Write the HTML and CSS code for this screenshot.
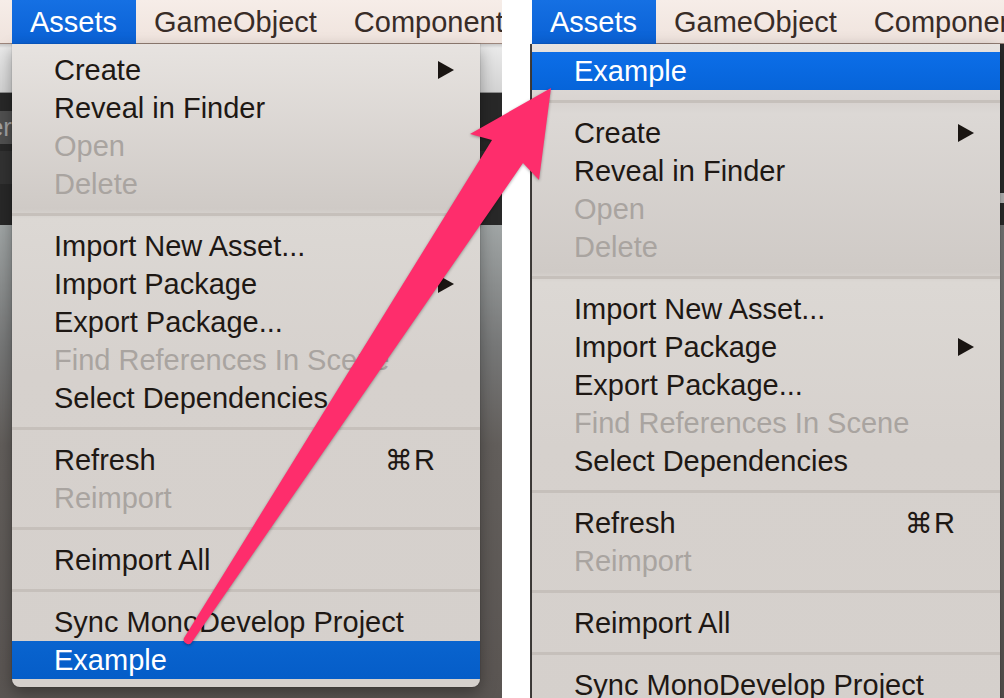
FILE: index.html
```html
<!DOCTYPE html>
<html>
<head>
<meta charset="utf-8">
<link rel="stylesheet" href="styles.css">
</head>
<body>
<div class="page">
  <section class="shot shot-left">
    <div class="menubar">
      <span class="mb-item active">Assets</span>
      <span class="mb-item">GameObject</span>
      <span class="mb-item">Component</span>
    </div>
    <div class="workspace">
      <div class="toolbar"></div>
      <div class="panel">
        <div class="tab"><span>Hierarchy Header</span></div>
        <div class="panel-row"></div>
      </div>
      <div class="scene"></div>
    </div>
    <div class="dropdown">
      <div class="item"><span class="label">Create</span><span class="sub-arrow"></span></div>
      <div class="item"><span class="label">Reveal in Finder</span></div>
      <div class="item disabled"><span class="label">Open</span></div>
      <div class="item disabled"><span class="label">Delete</span></div>
      <div class="sep"></div>
      <div class="item"><span class="label">Import New Asset...</span></div>
      <div class="item"><span class="label">Import Package</span><span class="sub-arrow"></span></div>
      <div class="item"><span class="label">Export Package...</span></div>
      <div class="item disabled"><span class="label">Find References In Scene</span></div>
      <div class="item"><span class="label">Select Dependencies</span></div>
      <div class="sep"></div>
      <div class="item"><span class="label">Refresh</span><span class="shortcut"><span class="cmd">⌘</span>R</span></div>
      <div class="item disabled"><span class="label">Reimport</span></div>
      <div class="sep"></div>
      <div class="item"><span class="label">Reimport All</span></div>
      <div class="sep"></div>
      <div class="item"><span class="label">Sync MonoDevelop Project</span></div>
      <div class="item selected"><span class="label">Example</span></div>
    </div>
  </section>

  <section class="shot shot-right">
    <div class="menubar">
      <span class="mb-item active">Assets</span>
      <span class="mb-item">GameObject</span>
      <span class="mb-item">Component</span>
    </div>
    <div class="workspace workspace-right">
      <div class="edge-left"></div>
      <div class="fill"></div>
      <div class="edge-right">
        <div class="er-dark"></div>
        <div class="er-light"></div>
        <div class="er-dark2"></div>
        <div class="er-scene"></div>
      </div>
    </div>
    <div class="dropdown">
      <div class="item selected top"><span class="label">Example</span></div>
      <div class="sep"></div>
      <div class="item"><span class="label">Create</span><span class="sub-arrow"></span></div>
      <div class="item"><span class="label">Reveal in Finder</span></div>
      <div class="item disabled"><span class="label">Open</span></div>
      <div class="item disabled"><span class="label">Delete</span></div>
      <div class="sep"></div>
      <div class="item"><span class="label">Import New Asset...</span></div>
      <div class="item"><span class="label">Import Package</span><span class="sub-arrow"></span></div>
      <div class="item"><span class="label">Export Package...</span></div>
      <div class="item disabled"><span class="label">Find References In Scene</span></div>
      <div class="item"><span class="label">Select Dependencies</span></div>
      <div class="sep"></div>
      <div class="item"><span class="label">Refresh</span><span class="shortcut"><span class="cmd">⌘</span>R</span></div>
      <div class="item disabled"><span class="label">Reimport</span></div>
      <div class="sep"></div>
      <div class="item"><span class="label">Reimport All</span></div>
      <div class="sep"></div>
      <div class="item"><span class="label">Sync MonoDevelop Project</span></div>
    </div>
  </section>

  <svg class="arrow" width="1004" height="698" viewBox="0 0 1004 698" xmlns="http://www.w3.org/2000/svg">
    <path d="M184,638 L492,140 L470,134 L551,88 L539,180 L523,163 L192,642 A4.5,4.5 0 0 1 184,638 Z" fill="#fe2d6c"/>
  </svg>
</div>
</body>
</html>
```

FILE: styles.css
```css
* {
  box-sizing: border-box;
  margin: 0;
  padding: 0;
}

html, body {
  width: 1004px;
  height: 698px;
  overflow: hidden;
  background: #ffffff;
}

body {
  font-family: "Liberation Sans", Arial, sans-serif;
}

.page {
  position: relative;
  display: flex;
  gap: 28px;
  width: 1004px;
  height: 698px;
}

.shot {
  position: relative;
  display: flex;
  flex-direction: column;
  height: 698px;
  overflow: hidden;
  flex-shrink: 0;
}

.shot-left {
  width: 502px;
}

.shot-right {
  width: 474px;
}

/* ---------- menu bar ---------- */
.menubar {
  height: 44px;
  flex-shrink: 0;
  display: flex;
  padding-left: 12px;
  background: linear-gradient(#f6ede8, #efe3dd);
  box-shadow: inset 0 -1px 0 #9c867c;
}

.shot-right .menubar {
  margin-left: 2px;
  padding-left: 0;
}

.mb-item {
  padding: 0 19px 0 18px;
  line-height: 44px;
  font-size: 29px;
  color: #382c27;
  white-space: nowrap;
}

.mb-item.active {
  background: linear-gradient(#1570e3, #0a61d5);
  color: #ffffff;
}

/* ---------- workspace behind the menus ---------- */
.workspace {
  flex: 1;
  display: flex;
  flex-direction: column;
}

.toolbar {
  height: 49px;
  background: linear-gradient(#c9c9c9 0, #e9e9e9 4px, #d3d3d3 100%);
  border-bottom: 1px solid #8e8e8e;
}

.panel {
  height: 132px;
  background: #282828;
  padding-top: 18px;
}

.tab {
  width: 12px;
  height: 33px;
  background: #505050;
  color: #a3a3a3;
  font-size: 26px;
  line-height: 33px;
  display: flex;
  justify-content: flex-end;
  overflow: hidden;
  white-space: nowrap;
}

.panel-row {
  height: 33px;
  margin-top: 7px;
  background: #323232;
}

.scene {
  flex: 1;
  background: linear-gradient(#a0a5a5 0, #777878 120px, #625e5b 220px, #5a5552 100%);
}

.workspace-right {
  flex-direction: row;
}

.edge-left {
  width: 2px;
  background: #4b4745;
}

.fill {
  flex: 1;
  background: #5a5552;
}

.edge-right {
  width: 4px;
  display: flex;
  flex-direction: column;
}

.er-dark {
  height: 149px;
  background: #2b2b2b;
}

.er-light {
  height: 10px;
  background: #bdbdbd;
}

.er-dark2 {
  height: 22px;
  background: #2b2b2b;
}

.er-scene {
  flex: 1;
  background: linear-gradient(#7a7a7a, #5a5552);
}

/* ---------- dropdown menus ---------- */
.dropdown {
  position: absolute;
  top: 44px;
  width: 468px;
  font-size: 29px;
  color: #1e1814;
  box-shadow: 0 6px 16px rgba(0, 0, 0, 0.35), 0 0 0 1px rgba(0, 0, 0, 0.06);
}

.shot-left .dropdown {
  left: 12px;
  padding: 7px 0 8px;
  border-radius: 0 0 8px 8px;
  background: linear-gradient(#e7e3e0 0, #cfcac6 165px, #dcd8d4 175px, #d6d1cd 330px, #d5d0cc 100%);
}

.shot-right .dropdown {
  left: 2px;
  padding-top: 8px;
  height: 680px;
  background: linear-gradient(#e7e3e0 0, #d8d3d0 60px, #dcd8d5 70px, #cfcac6 228px, #dcd8d4 238px, #d6d1cd 400px, #d5d0cc 100%);
}

.item {
  display: flex;
  align-items: center;
  height: 38px;
  padding: 0 26px 0 42px;
  white-space: nowrap;
}

.label {
  flex: 1;
}

.item.disabled {
  color: #a9a4a0;
}

.item.selected {
  background: linear-gradient(#0964cf, #055dc8);
  color: #ffffff;
}

.item.selected.top {
  background: linear-gradient(#0c6ee8, #0664d9);
}

.sub-arrow {
  width: 0;
  height: 0;
  border-left: 16px solid #1a1512;
  border-top: 9.5px solid transparent;
  border-bottom: 9.5px solid transparent;
}

.shortcut {
  margin-right: 19px;
  display: flex;
  align-items: center;
}

.cmd {
  font-family: "DejaVu Sans", sans-serif;
  font-size: 28px;
  margin-right: 1px;
}

.sep {
  height: 3px;
  margin: 10px 0 11px;
  background: #c6c0bb;
}

/* ---------- annotation arrow ---------- */
.arrow {
  position: absolute;
  left: 0;
  top: 0;
  pointer-events: none;
  filter: drop-shadow(0 1px 1.5px rgba(0, 0, 0, 0.35));
}
```
